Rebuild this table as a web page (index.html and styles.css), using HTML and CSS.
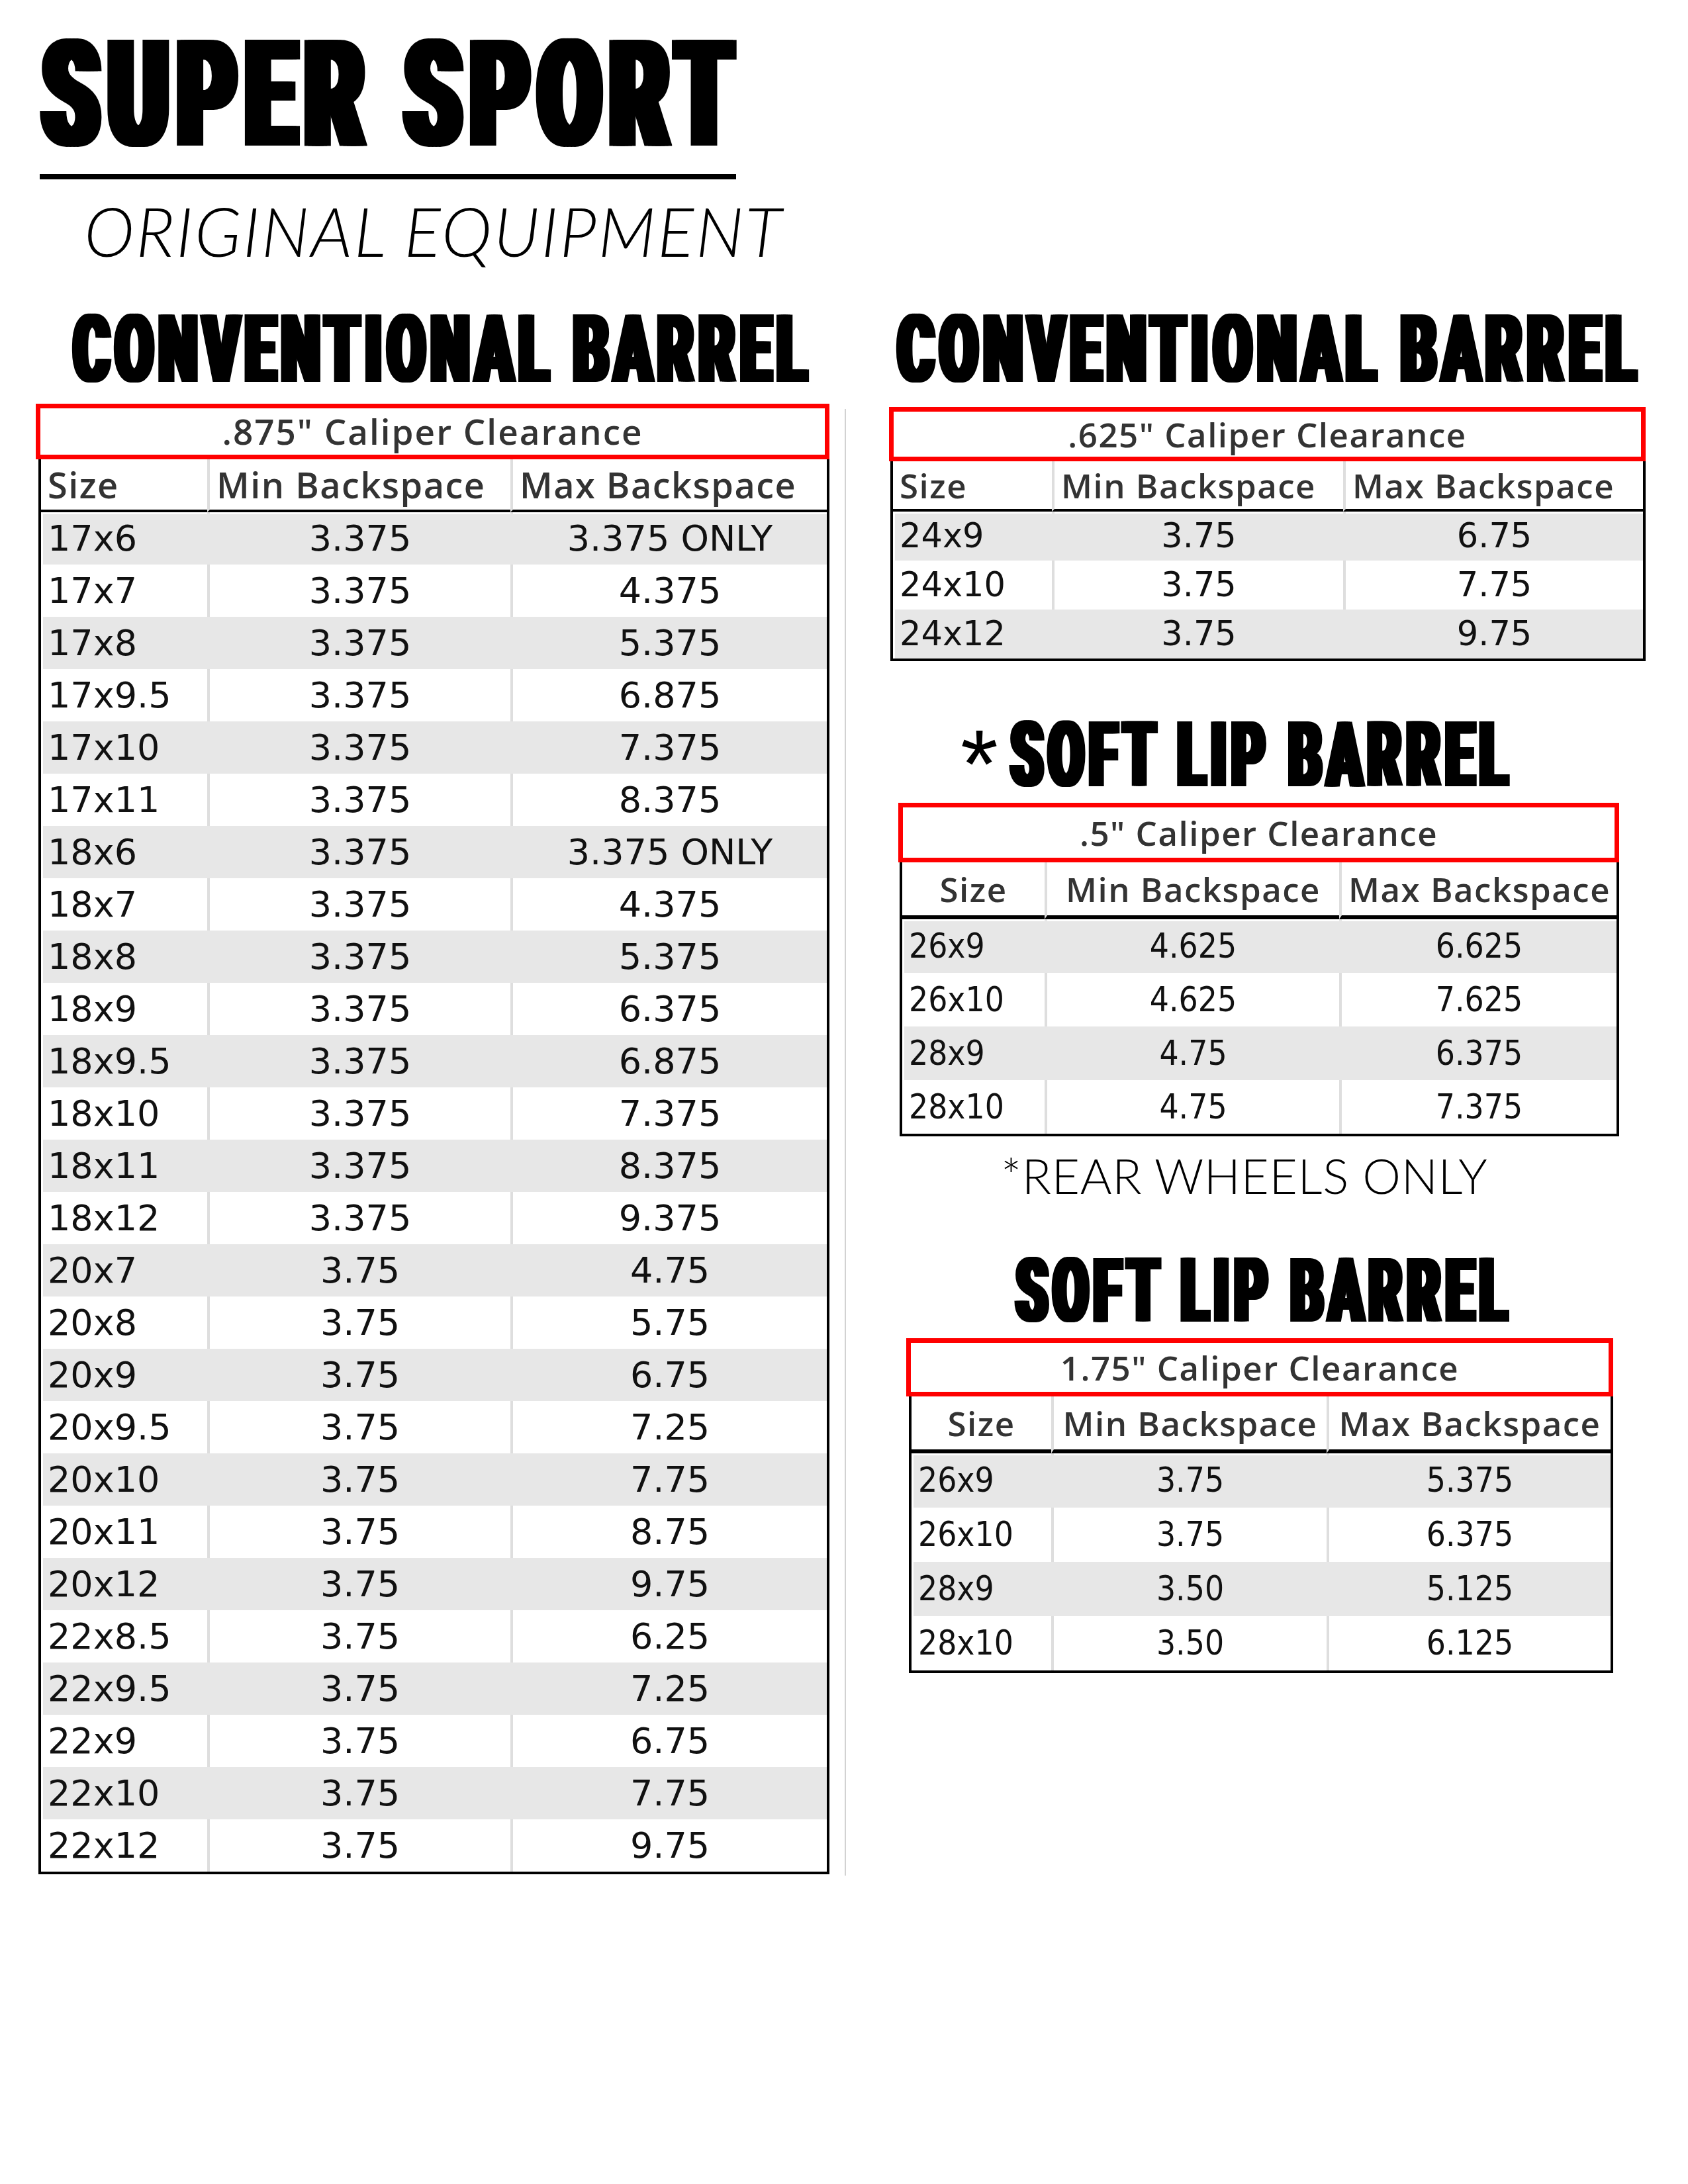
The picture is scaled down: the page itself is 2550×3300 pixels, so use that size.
FILE: index.html
```html
<!DOCTYPE html>
<html lang="en">
<head>
<meta charset="utf-8">
<title>Super Sport Original Equipment – Backspace Chart</title>
<link rel="stylesheet" href="styles.css">
</head>
<body>
<div class="page">
  <header class="brand">
    <h1 class="hbox title"><span class="heavy">SUPER SPORT</span></h1>
    <div class="rule"></div>
    <p class="subtitle">ORIGINAL EQUIPMENT</p>
  </header>

  <main class="cols">
    <section class="col col-left">
      <h2 class="hbox conv conv-left"><span class="heavy">CONVENTIONAL BARREL</span></h2>
      <div class="chart chart-main">
        <div class="caption">.875" Caliper Clearance</div>
        <table class="grid">
          <colgroup><col class="c1"><col class="c2"><col class="c3"></colgroup>
          <thead><tr><th>Size</th><th>Min Backspace</th><th>Max Backspace</th></tr></thead>
          <tbody>
            <tr><td>17x6</td><td>3.375</td><td>3.375 ONLY</td></tr>
            <tr><td>17x7</td><td>3.375</td><td>4.375</td></tr>
            <tr><td>17x8</td><td>3.375</td><td>5.375</td></tr>
            <tr><td>17x9.5</td><td>3.375</td><td>6.875</td></tr>
            <tr><td>17x10</td><td>3.375</td><td>7.375</td></tr>
            <tr><td>17x11</td><td>3.375</td><td>8.375</td></tr>
            <tr><td>18x6</td><td>3.375</td><td>3.375 ONLY</td></tr>
            <tr><td>18x7</td><td>3.375</td><td>4.375</td></tr>
            <tr><td>18x8</td><td>3.375</td><td>5.375</td></tr>
            <tr><td>18x9</td><td>3.375</td><td>6.375</td></tr>
            <tr><td>18x9.5</td><td>3.375</td><td>6.875</td></tr>
            <tr><td>18x10</td><td>3.375</td><td>7.375</td></tr>
            <tr><td>18x11</td><td>3.375</td><td>8.375</td></tr>
            <tr><td>18x12</td><td>3.375</td><td>9.375</td></tr>
            <tr><td>20x7</td><td>3.75</td><td>4.75</td></tr>
            <tr><td>20x8</td><td>3.75</td><td>5.75</td></tr>
            <tr><td>20x9</td><td>3.75</td><td>6.75</td></tr>
            <tr><td>20x9.5</td><td>3.75</td><td>7.25</td></tr>
            <tr><td>20x10</td><td>3.75</td><td>7.75</td></tr>
            <tr><td>20x11</td><td>3.75</td><td>8.75</td></tr>
            <tr><td>20x12</td><td>3.75</td><td>9.75</td></tr>
            <tr><td>22x8.5</td><td>3.75</td><td>6.25</td></tr>
            <tr><td>22x9.5</td><td>3.75</td><td>7.25</td></tr>
            <tr><td>22x9</td><td>3.75</td><td>6.75</td></tr>
            <tr><td>22x10</td><td>3.75</td><td>7.75</td></tr>
            <tr><td>22x12</td><td>3.75</td><td>9.75</td></tr>
          </tbody>
        </table>
      </div>
    </section>

    <div class="vline"></div>

    <section class="col col-right">
      <h2 class="hbox conv conv-right"><span class="heavy">CONVENTIONAL BARREL</span></h2>
      <div class="chart chart-625">
        <div class="caption">.625" Caliper Clearance</div>
        <table class="grid">
          <colgroup><col class="c1"><col class="c2"><col class="c3"></colgroup>
          <thead><tr><th>Size</th><th>Min Backspace</th><th>Max Backspace</th></tr></thead>
          <tbody>
            <tr><td>24x9</td><td>3.75</td><td>6.75</td></tr>
            <tr><td>24x10</td><td>3.75</td><td>7.75</td></tr>
            <tr><td>24x12</td><td>3.75</td><td>9.75</td></tr>
          </tbody>
        </table>
      </div>

      <div class="soft-head">
        <span class="star">*</span>
        <h2 class="hbox soft1"><span class="heavy">SOFT LIP BARREL</span></h2>
      </div>
      <div class="chart chart-5 soft">
        <div class="caption">.5" Caliper Clearance</div>
        <table class="grid">
          <colgroup><col class="c1"><col class="c2"><col class="c3"></colgroup>
          <thead><tr><th>Size</th><th>Min Backspace</th><th>Max Backspace</th></tr></thead>
          <tbody>
            <tr><td>26x9</td><td>4.625</td><td>6.625</td></tr>
            <tr><td>26x10</td><td>4.625</td><td>7.625</td></tr>
            <tr><td>28x9</td><td>4.75</td><td>6.375</td></tr>
            <tr><td>28x10</td><td>4.75</td><td>7.375</td></tr>
          </tbody>
        </table>
      </div>
      <p class="note">*REAR WHEELS ONLY</p>

      <h2 class="hbox soft2"><span class="heavy">SOFT LIP BARREL</span></h2>
      <div class="chart chart-175 soft">
        <div class="caption">1.75" Caliper Clearance</div>
        <table class="grid">
          <colgroup><col class="c1"><col class="c2"><col class="c3"></colgroup>
          <thead><tr><th>Size</th><th>Min Backspace</th><th>Max Backspace</th></tr></thead>
          <tbody>
            <tr><td>26x9</td><td>3.75</td><td>5.375</td></tr>
            <tr><td>26x10</td><td>3.75</td><td>6.375</td></tr>
            <tr><td>28x9</td><td>3.50</td><td>5.125</td></tr>
            <tr><td>28x10</td><td>3.50</td><td>6.125</td></tr>
          </tbody>
        </table>
      </div>
    </section>
  </main>
</div>
</body>
</html>
```

FILE: styles.css
```css
html, body {
  margin: 0;
  padding: 0;
  background: #ffffff;
}

.page {
  width: 2550px;
  min-height: 3300px;
  box-sizing: border-box;
  padding-top: 64px;
}

/* ---------- heavy condensed headings ----------
   Text is laid out at its final width and stretched vertically,
   so the layout box never runs wider than the visible letters. */
.hbox {
  display: flex;
  align-items: center;
  margin: 0;
  white-space: nowrap;
  font-family: Roboto, "Liberation Sans", sans-serif;
  font-weight: 900;
  color: #000;
}

.heavy {
  display: block;
  flex: none;
  transform-origin: 50% 50%;
  letter-spacing: 0.1em;
  text-shadow: 0.04em 0 0 #000, 0.08em 0 0 #000, 0.12em 0 0 #000;
}

/* ---------- brand block ---------- */
.brand {
  margin-left: 60px;
}

.title {
  margin-left: -4px;
  width: 1047px;
  height: 160px;
}
.title .heavy {
  font-size: 136.7px;
  line-height: 97.2px;
  transform: scaleY(1.6455);
}

.rule {
  margin-top: 39px;
  width: 1052px;
  height: 8px;
  background: #000;
}

.subtitle {
  margin: 40px 0 0 67px;
  height: 74px;
  font-family: Lato, "Open Sans", sans-serif;
  font-weight: 300;
  font-style: italic;
  font-size: 103px;
  line-height: 74px;
  letter-spacing: 2.5px;
  color: #000;
  white-space: nowrap;
}

/* ---------- columns ---------- */
.cols {
  display: flex;
  align-items: flex-start;
  margin-top: 93px;
}

.col-left {
  flex: none;
  width: 1199px;
  margin-left: 54px;
}

.vline {
  flex: none;
  width: 2px;
  height: 2216px;
  margin: 140px 0 0 23px;
  background: #d2d2d2;
}

.col-right {
  flex: none;
  width: 1143px;
  margin-left: 65px;
}

.conv {
  height: 102px;
}
.conv-left { margin-left: 52px; width: 1116px; }
.conv-left .heavy {
  font-size: 83.3px;
  line-height: 59.35px;
  transform: scaleY(1.7225);
}
.conv-right { margin-left: 8px; width: 1118px; }
.conv-right .heavy {
  font-size: 83.86px;
  line-height: 59.6px;
  transform: scaleY(1.711);
}

.soft-head {
  display: flex;
  align-items: flex-start;
  margin: 94px 0 0 108px;
  height: 98px;
}

.star {
  flex: none;
  width: 55px;
  height: 98px;
  margin-right: 16px;
  font-family: "Liberation Sans", Arial, sans-serif;
  font-weight: 400;
  font-size: 146px;
  line-height: 123px;
  color: #000;
}

.soft1 {
  flex: none;
  width: 754px;
  height: 98px;
}
.soft1 .heavy {
  font-size: 78.2px;
  line-height: 55.5px;
  transform: scaleY(1.765);
}

.soft2 {
  margin: 100px 0 0 187px;
  width: 746px;
  height: 96px;
}
.soft2 .heavy {
  font-size: 77.3px;
  line-height: 55px;
  transform: scaleY(1.7465);
}

.note {
  margin: 33px 0 0 169px;
  height: 52px;
  font-family: Lato, "Open Sans", sans-serif;
  font-weight: 300;
  font-size: 73px;
  line-height: 52px;
  letter-spacing: 0.65px;
  color: #000;
  white-space: nowrap;
}

/* ---------- charts ---------- */
.caption {
  box-sizing: border-box;
  border: 7px solid #ff0000;
  text-align: center;
  font-family: "Open Sans", "Noto Sans", sans-serif;
  font-weight: 600;
  color: #333;
  white-space: nowrap;
}

.grid {
  box-sizing: border-box;
  border-collapse: separate;
  border-spacing: 0;
  table-layout: fixed;
  border: 4px solid #000;
  border-top: 0;
}

.grid th,
.grid td {
  padding: 0 10px;
  white-space: nowrap;
}

.grid th {
  font-family: "Open Sans", "Noto Sans", sans-serif;
  font-weight: 600;
  color: #333;
  text-align: left;
  border-bottom: 4px solid #000;
}

.grid td {
  font-family: "DejaVu Sans", Verdana, sans-serif;
  font-weight: 400;
  color: #111;
  text-align: center;
}
.grid td:first-child { text-align: left; }

.grid th + th,
.grid td + td {
  border-left: 4px solid #dedede;
}

.grid tbody tr:nth-child(odd) td {
  background: #e7e7e7;
  border-left-color: #e7e7e7;
}

/* thin white inset between the frame and the striped body */
.grid tbody td:first-child {
  box-shadow: inset 3px 0 0 #fff;
}
.grid tbody tr:first-child td {
  box-shadow: inset 0 3px 0 #fff;
}
.grid tbody tr:first-child td:first-child {
  box-shadow: inset 3px 0 0 #fff, inset 0 3px 0 #fff;
}

/* main (left) chart */
.chart-main { margin-top: 30px; }
.chart-main .caption {
  width: 1199px;
  height: 84px;
  line-height: 70px;
  font-size: 53px;
  letter-spacing: 2px;
}
.chart-main .grid { width: 1195px; margin-left: 4px; }
.chart-main .c1 { width: 251px; }
.chart-main .c2 { width: 458px; }
.chart-main .c3 { width: 478px; }
.chart-main th { font-size: 54px; letter-spacing: 1.5px; line-height: 76px; }
.chart-main td { font-size: 54px; line-height: 79px; }

/* .625 chart */
.chart-625 { margin-top: 35px; }
.chart-625 .caption {
  width: 1143px;
  height: 82px;
  line-height: 68px;
  font-size: 51px;
  letter-spacing: 1.5px;
}
.chart-625 .grid { width: 1141px; margin-left: 2px; }
.chart-625 .c1 { width: 240px; }
.chart-625 .c2 { width: 440px; }
.chart-625 .c3 { width: 453px; }
.chart-625 th { font-size: 51px; letter-spacing: 1.5px; line-height: 72px; }
.chart-625 td { font-size: 51px; line-height: 74px; }

/* soft lip charts */
.soft .caption {
  font-size: 51px;
  letter-spacing: 1.5px;
}
.soft th {
  font-size: 51px;
  letter-spacing: 1.5px;
  line-height: 80px;
  text-align: center;
  border-bottom-width: 6px;
}
.soft td {
  font-family: "DejaVu Sans Condensed", "DejaVu Sans", sans-serif;
  font-stretch: condensed;
  font-size: 51px;
}

.chart-5 { margin: 22px 0 0 14px; }
.chart-5 .caption { width: 1089px; height: 90px; line-height: 76px; }
.chart-5 .grid { width: 1087px; margin-left: 2px; }
.chart-5 .c1 { width: 215px; }
.chart-5 .c2 { width: 445px; }
.chart-5 .c3 { width: 419px; }
.chart-5 td { line-height: 81px; }

.chart-175 { margin: 24px 0 0 26px; }
.chart-175 .caption { width: 1068px; height: 88px; line-height: 74px; }
.chart-175 .grid { width: 1064px; margin-left: 4px; }
.chart-175 .c1 { width: 211px; }
.chart-175 .c2 { width: 416px; }
.chart-175 .c3 { width: 429px; }
.chart-175 td { line-height: 82px; }
```
